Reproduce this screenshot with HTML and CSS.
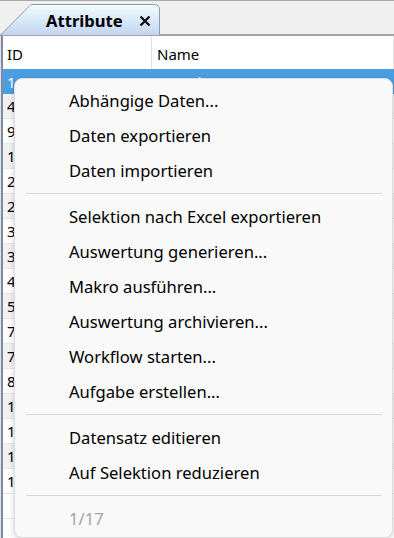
FILE: index.html
```html
<!DOCTYPE html>
<html lang="de">
  <head>
    <meta charset="UTF-8" />
    <meta name="viewport" content="width=device-width, initial-scale=1.0" />
    <title>Attribute</title>
    <link rel="stylesheet" href="styles.css">
  </head>
  <body>
    <div class="window">
      <header class="tabstrip">
        <div class="tab">
          <svg class="tab_shape" width="162" height="33" viewBox="0 0 162 33">
            <defs>
              <linearGradient id="tabfill" x1="0" y1="0" x2="0" y2="1">
                <stop offset="0" stop-color="#f2fcfe" />
                <stop offset="0.45" stop-color="#dcebf8" />
                <stop offset="1" stop-color="#c3d4f1" />
              </linearGradient>
            </defs>
            <path d="M0.5 33 L31 2.5 L154 2.5 Q159.5 2.5 159.5 8 L159.5 33"
              fill="url(#tabfill)" stroke="#8f9aa8" stroke-width="1" />
          </svg>
          <div class="tab_label">
            <span class="tab_title">Attribute</span>
            <svg class="tab_close" width="12" height="12" viewBox="0 0 12 12">
              <path d="M1.5 1.5 L10.5 10.5 M10.5 1.5 L1.5 10.5" stroke="#111" stroke-width="2.4" />
            </svg>
          </div>
        </div>
      </header>

      <section class="grid">
        <div class="row head">
          <div class="cell">ID</div>
          <div class="cell">Name</div>
        </div>
        <div class="row selected">
          <div class="cell">1</div>
          <div class="cell">Kontaktpersonen</div>
        </div>
        <div class="row"><div class="cell">4</div><div class="cell"></div></div>
        <div class="row"><div class="cell">9</div><div class="cell"></div></div>
        <div class="row"><div class="cell">1</div><div class="cell"></div></div>
        <div class="row"><div class="cell">2</div><div class="cell"></div></div>
        <div class="row"><div class="cell">2</div><div class="cell"></div></div>
        <div class="row"><div class="cell">3</div><div class="cell"></div></div>
        <div class="row"><div class="cell">3</div><div class="cell"></div></div>
        <div class="row"><div class="cell">4</div><div class="cell"></div></div>
        <div class="row"><div class="cell">5</div><div class="cell"></div></div>
        <div class="row"><div class="cell">7</div><div class="cell"></div></div>
        <div class="row"><div class="cell">7</div><div class="cell"></div></div>
        <div class="row"><div class="cell">8</div><div class="cell"></div></div>
        <div class="row"><div class="cell">1</div><div class="cell"></div></div>
        <div class="row"><div class="cell">1</div><div class="cell"></div></div>
        <div class="row"><div class="cell">1</div><div class="cell"></div></div>
        <div class="row"><div class="cell">1</div><div class="cell"></div></div>
        <div class="row empty"><div class="cell"></div><div class="cell"></div></div>
        <div class="row empty"><div class="cell"></div><div class="cell"></div></div>

        <!-- Kontextmenü über der Tabelle -->
        <ul class="context_menu">
          <li class="item">Abhängige Daten...</li>
          <li class="item">Daten exportieren</li>
          <li class="item">Daten importieren</li>
          <li class="sep"></li>
          <li class="item">Selektion nach Excel exportieren</li>
          <li class="item">Auswertung generieren...</li>
          <li class="item">Makro ausführen...</li>
          <li class="item">Auswertung archivieren...</li>
          <li class="item">Workflow starten...</li>
          <li class="item">Aufgabe erstellen...</li>
          <li class="sep"></li>
          <li class="item">Datensatz editieren</li>
          <li class="item">Auf Selektion reduzieren</li>
          <li class="sep"></li>
          <li class="item disabled">1/17</li>
        </ul>
      </section>
    </div>
  </body>
</html>
```

FILE: styles.css
```css
* {
  margin: 0;
  padding: 0;
  box-sizing: border-box;
  list-style-type: none;
}

html,
body {
  width: 394px;
  height: 538px;
  overflow: hidden;
}

body {
  font-family: "Noto Sans", "Open Sans", sans-serif;
  font-size: 15px;
  color: #000;
  background-color: #e3e3e3;
}

.window {
  display: flex;
  flex-direction: column;
  height: 100%;
}

/* --- tab strip --- */
.tabstrip {
  height: 36px;
  flex: none;
  display: flex;
  align-items: flex-end;
  background-color: #f0f0f0;
  border-top: 1px solid #a7a7ad;
  border-bottom: 2px solid #a3a3a3;
}
.tab {
  display: grid;
  width: 162px;
  height: 33px;
  margin-bottom: -1px;

  & > * {
    grid-area: 1 / 1;
  }
}
.tab_shape {
  display: block;
}
.tab_label {
  display: flex;
  align-items: center;
  gap: 16px;
  padding: 3px 0 0 46px;
}
.tab_title {
  font-weight: bold;
  font-size: 16.6px;
}
.tab_close {
  margin-top: 1px;
}

/* --- grid --- */
.grid {
  position: relative;
  flex: 1;
  overflow: hidden;
  background-color: #fff;
  border-left: 2px solid #7d8aa3;
  margin-left: 1px;
}
.row {
  display: grid;
  grid-template-columns: 149px 1fr;
  height: 25px;
  align-items: center;
  border-bottom: 1px solid #e6e6e6;

  &:nth-child(odd) {
    background-color: #f2f2f2;
  }
}
.cell {
  padding-left: 4px;
  height: 100%;
  display: flex;
  align-items: center;
  white-space: nowrap;
  overflow: hidden;
}
.row.head {
  height: 33px;
  background-color: #fff;
  border-bottom: none;

  & .cell {
    border-right: 1px solid #e2e2e2;
    padding-top: 2px;
  }
  & .cell + .cell {
    padding-left: 5px;
  }
}
.row.selected {
  background-color: #4a9fe3;
  color: #fff;
  border-bottom: none;
}
.row.empty {
  background-color: #fff;
}

/* --- context menu --- */
.context_menu {
  position: absolute;
  left: 11px;
  top: 42px;
  width: 379px;
  padding: 4px 0 1px;
  background-color: #f9f9f9;
  border: 1px solid #dcdcdc;
  border-radius: 8px;
  box-shadow: 0 2px 6px rgba(0, 0, 0, 0.18);
}
.item {
  height: 35px;
  line-height: 35px;
  padding-left: 54px;
  font-size: 16.6px;
  white-space: nowrap;
}
.item.disabled {
  color: #a3a3a3;
}
.sep {
  height: 1px;
  margin: 5px 10px 5px 11px;
  background-color: #d6d6d6;
}
```
